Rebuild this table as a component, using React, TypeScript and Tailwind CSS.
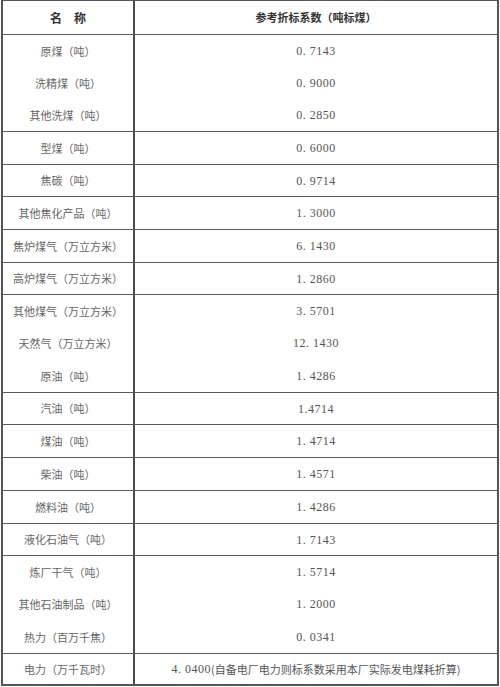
const groups: { h: number; items: [string, string][] }[] = [
  {
    h: 97,
    items: [
      ["原煤（吨）", "0. 7143"],
      ["洗精煤（吨）", "0. 9000"],
      ["其他洗煤（吨）", "0. 2850"],
    ],
  },
  { h: 33, items: [["型煤（吨）", "0. 6000"]] },
  { h: 32, items: [["焦碳（吨）", "0. 9714"]] },
  { h: 33, items: [["其他焦化产品（吨）", "1. 3000"]] },
  { h: 33, items: [["焦炉煤气（万立方米）", "6. 1430"]] },
  { h: 32, items: [["高炉煤气（万立方米）", "1. 2860"]] },
  {
    h: 98,
    items: [
      ["其他煤气（万立方米）", "3. 5701"],
      ["天然气（万立方米）", "12. 1430"],
      ["原油（吨）", "1. 4286"],
    ],
  },
  { h: 32, items: [["汽油（吨）", "1.4714"]] },
  { h: 33, items: [["煤油（吨）", "1. 4714"]] },
  { h: 33, items: [["柴油（吨）", "1. 4571"]] },
  { h: 33, items: [["燃料油（吨）", "1. 4286"]] },
  { h: 32, items: [["液化石油气（吨）", "1. 7143"]] },
  {
    h: 98,
    items: [
      ["炼厂干气（吨）", "1. 5714"],
      ["其他石油制品（吨）", "1. 2000"],
      ["热力（百万千焦）", "0. 0341"],
    ],
  },
];

const cjk = "font-['Noto_Sans_CJK_SC',sans-serif]";
const num = "font-['Liberation_Serif','Noto_Sans_CJK_SC',serif]";

function GroupRow({ h, items }: { h: number; items: [string, string][] }) {
  return (
    <div
      className="flex border-t border-[#5a5a5a]"
      style={{ height: h }}
    >
      <div className="w-[132px] shrink-0 border-r-2 border-[#4a4a4a] flex flex-col">
        {items.map(([name]) => (
          <div
            key={name}
            className={`flex-1 flex items-center justify-center text-[11px] text-[#666] ${cjk}`}
          >
            {name}
          </div>
        ))}
      </div>
      <div className="flex-1 flex flex-col">
        {items.map(([name, v]) => (
          <div
            key={name}
            className={`flex-1 flex items-center justify-center text-[12px] text-[#555] tracking-[0.5px] ${num}`}
          >
            {v}
          </div>
        ))}
      </div>
    </div>
  );
}

export default function App() {
  return (
    <div className="w-[500px] h-[687px] bg-white overflow-hidden">
      <div className="ml-[1px] w-[498px] border-2 border-[#555] border-t-[1px] border-r-[2px]">
        <div className="flex h-[33px]">
          <div
            className={`w-[132px] shrink-0 border-r-2 border-[#4a4a4a] flex items-center justify-center text-[12px] font-bold text-[#333] ${cjk}`}
          >
            名　称
          </div>
          <div
            className={`flex-1 flex items-center justify-center text-[11px] font-bold text-[#333] ${cjk}`}
          >
            参考折标系数（吨标煤）
          </div>
        </div>
        {groups.map((g, i) => (
          <GroupRow key={i} h={g.h} items={g.items} />
        ))}
        <div className="flex h-[31px] border-t border-[#5a5a5a]">
          <div
            className={`w-[132px] shrink-0 border-r-2 border-[#4a4a4a] flex items-center justify-center text-[11px] text-[#666] ${cjk}`}
          >
            电力（万千瓦时）
          </div>
          <div
            className={`flex-1 flex items-center justify-center text-[11px] text-[#555] ${cjk}`}
          >
            <span className={`${num} text-[12px] tracking-[0.5px]`}>4. 0400</span>
            (自备电厂电力则标系数采用本厂实际发电煤耗折算)
          </div>
        </div>
      </div>
    </div>
  );
}
